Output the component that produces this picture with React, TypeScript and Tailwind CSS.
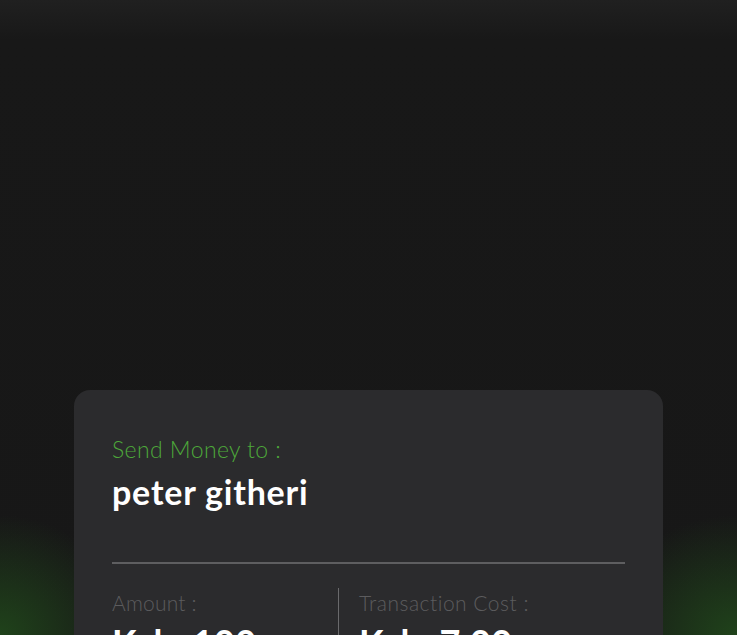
export default function App() {
  return (
    <div
      className="relative h-[635px] w-full overflow-hidden bg-[#171717] font-['Lato','Liberation_Sans',sans-serif]"
    >
      <div className="pointer-events-none absolute inset-0 bg-[linear-gradient(to_bottom,#202020_0px,#181818_40px,#171717_100%)]" />
      <div className="pointer-events-none absolute inset-0 bg-[radial-gradient(ellipse_130px_120px_at_0%_100%,rgba(40,110,30,0.5),transparent_100%),radial-gradient(ellipse_140px_120px_at_100%_100%,rgba(40,110,30,0.5),transparent_100%)]" />

      <div className="relative pt-[390px]">
        <div className="mx-[74px] h-[300px] rounded-2xl bg-[#2b2b2d] px-[38px] pt-[45px]">
          <p className="text-[23px] font-light leading-[28px] tracking-[0.4px] text-[#4da83a]">Send Money to :</p>
          <p className="mt-[9px] text-[34px] font-bold leading-[40px] tracking-[0.8px] text-white">peter githeri</p>

          <div className="mt-[50px] h-[2px] bg-[#5e5e60]" />

          <div className="mt-[24px] flex">
            <div className="w-[227px] border-r border-[#6a6a6c] pt-[2px]">
              <p className="text-[21px] font-light leading-[26px] tracking-[0.2px] text-[#5c5c5e]">Amount :</p>
              <p className="mt-[4px] text-[36px] font-bold leading-[44px] tracking-[0.5px] text-white">Ksh. 100</p>
            </div>
            <div className="pl-[20px] pt-[2px]">
              <p className="text-[21px] font-light leading-[26px] tracking-[0.5px] text-[#5c5c5e]">Transaction Cost :</p>
              <p className="mt-[4px] text-[36px] font-bold leading-[44px] tracking-[0.5px] text-white">Ksh. 7.00</p>
            </div>
          </div>
        </div>
      </div>
    </div>
  );
}
